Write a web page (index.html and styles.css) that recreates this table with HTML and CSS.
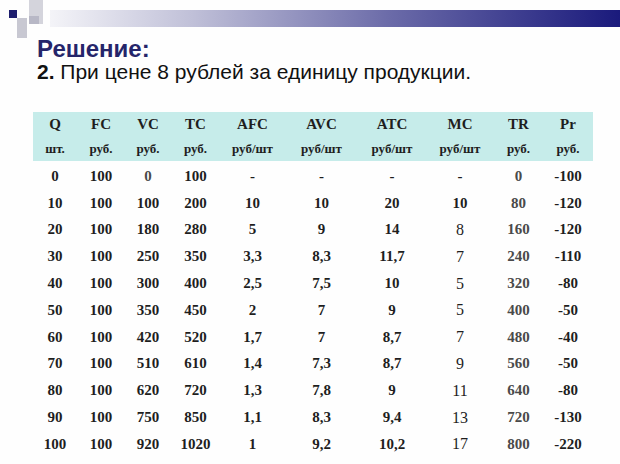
FILE: index.html
```html
<!DOCTYPE html>
<html>
<head>
<meta charset="utf-8">
<link rel="stylesheet" href="styles.css">
</head>
<body>
<div class="slide">
  <div class="top">
    <svg class="logo" width="50" height="40" viewBox="0 0 50 40">
      <rect x="29" y="0" width="14" height="24" fill="#d4d4dc"/>
      <rect x="17" y="18" width="10" height="20" fill="#c8c8d2"/>
      <rect x="29" y="16" width="10" height="8" fill="#b8b8c6"/>
      <rect x="9" y="10" width="8" height="8" fill="#1e1e6e"/>
    </svg>
    <div class="bar"></div>
  </div>
  <div class="heading">
    <div class="title">Решение:</div>
    <div class="subtitle"><b>2.</b> При цене 8 рублей за единицу продукции.</div>
  </div>
  <div class="table">
    <div class="head">
      <span>Q</span><span>FC</span><span>VC</span><span>TC</span><span>AFC</span><span>AVC</span><span>ATC</span><span>MC</span><span>TR</span><span>Pr</span>
      <span class="u">шт.</span><span class="u">руб.</span><span class="u">руб.</span><span class="u">руб.</span><span class="u">руб/шт</span><span class="u">руб/шт</span><span class="u">руб/шт</span><span class="u">руб/шт</span><span class="u">руб.</span><span class="u">руб.</span>
    </div>
    <div class="body">
      <span>0</span><span>100</span><span class="g">0</span><span>100</span><span>-</span><span>-</span><span>-</span><span>-</span><span class="g">0</span><span>-100</span>
      <span>10</span><span>100</span><span>100</span><span>200</span><span>10</span><span>10</span><span>20</span><span>10</span><span class="g">80</span><span>-120</span>
      <span>20</span><span>100</span><span>180</span><span>280</span><span>5</span><span>9</span><span>14</span><span class="mc">8</span><span class="g">160</span><span>-120</span>
      <span>30</span><span>100</span><span>250</span><span>350</span><span>3,3</span><span>8,3</span><span>11,7</span><span class="mc">7</span><span class="g">240</span><span>-110</span>
      <span>40</span><span>100</span><span>300</span><span>400</span><span>2,5</span><span>7,5</span><span>10</span><span class="mc">5</span><span class="g">320</span><span>-80</span>
      <span>50</span><span>100</span><span>350</span><span>450</span><span>2</span><span>7</span><span>9</span><span class="mc">5</span><span class="g">400</span><span>-50</span>
      <span>60</span><span>100</span><span>420</span><span>520</span><span>1,7</span><span>7</span><span>8,7</span><span class="mc">7</span><span class="g">480</span><span>-40</span>
      <span>70</span><span>100</span><span>510</span><span>610</span><span>1,4</span><span>7,3</span><span>8,7</span><span class="mc">9</span><span class="g">560</span><span>-50</span>
      <span>80</span><span>100</span><span>620</span><span>720</span><span>1,3</span><span>7,8</span><span>9</span><span class="mc">11</span><span class="g">640</span><span>-80</span>
      <span>90</span><span>100</span><span>750</span><span>850</span><span>1,1</span><span>8,3</span><span>9,4</span><span class="mc">13</span><span class="g">720</span><span>-130</span>
      <span>100</span><span>100</span><span>920</span><span>1020</span><span>1</span><span>9,2</span><span>10,2</span><span class="mc">17</span><span class="g">800</span><span>-220</span>
    </div>
  </div>
</div>
</body>
</html>
```

FILE: styles.css
```css
html, body {
  margin: 0;
  padding: 0;
  background: #ffffff;
}
.slide {
  width: 620px;
  height: 464px;
  overflow: hidden;
  background: #fefefe;
}
.top {
  display: flex;
  height: 37px;
}
.logo {
  flex: none;
  display: block;
}
.bar {
  flex: 1;
  height: 17px;
  margin-top: 10px;
  background: linear-gradient(to right, #f4f4f8 0%, #c0c0d8 25%, #6a6aa8 60%, #1a1a7c 100%);
}
.heading {
  padding-left: 37px;
  font-family: "Liberation Sans", Arial, sans-serif;
}
.title {
  font-size: 24px;
  font-weight: bold;
  color: #25256a;
  line-height: 24px;
}
.subtitle {
  font-size: 21px;
  color: #111;
  line-height: 22px;
}
.table {
  margin: 29px 0 0 33px;
  width: 560px;
  font-family: "Liberation Serif", "Times New Roman", serif;
  font-weight: bold;
  color: #1e1e1e;
}
.head, .body {
  display: grid;
  grid-template-columns: 44px 48px 46px 49px 65px 73px 68px 68px 49px 50px;
  text-align: center;
  align-items: center;
}
.head {
  background: #c6ecea;
  grid-auto-rows: 24.5px;
  font-size: 15px;
}
.head .u {
  font-size: 13px;
}
.body {
  padding-top: 2px;
  grid-auto-rows: 26.8px;
  font-size: 15px;
}
.body .mc {
  font-weight: normal;
  font-size: 16px;
}
.body .g {
  color: #4a4a4a;
}
```
